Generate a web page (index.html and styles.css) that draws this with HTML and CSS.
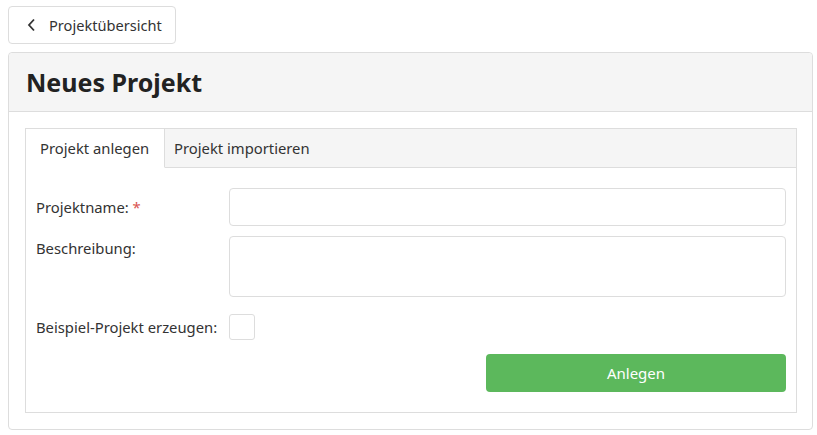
FILE: index.html
```html
<!DOCTYPE html>
<html lang="de">
<head>
<meta charset="utf-8">
<title>Neues Projekt</title>
<link rel="stylesheet" href="styles.css">
</head>
<body>
<div class="page">
  <a class="back-btn" href="#">
    <svg class="chev" width="9" height="14" viewBox="0 0 9 14"><path d="M7 1.5 L2 7 L7 12.5" fill="none" stroke="#333" stroke-width="1.8"/></svg>
    <span>Projektübersicht</span>
  </a>
  <div class="panel">
    <div class="panel-head"><h1>Neues Projekt</h1></div>
    <div class="panel-body">
      <div class="tabbox">
        <div class="tabs">
          <div class="tab active">Projekt anlegen</div>
          <div class="tab second">Projekt importieren</div>
          <div class="tab-fill"></div>
        </div>
        <form class="form">
          <div class="row">
            <label class="lbl">Projektname: <span class="req">*</span></label>
            <input class="ctl" type="text">
          </div>
          <div class="row top">
            <label class="lbl">Beschreibung:</label>
            <textarea class="ctl area"></textarea>
          </div>
          <div class="row">
            <label class="lbl">Beispiel-Projekt erzeugen:</label>
            <span class="check"></span>
          </div>
          <div class="actions">
            <button type="button" class="btn">Anlegen</button>
          </div>
        </form>
      </div>
    </div>
  </div>
</div>
</body>
</html>
```
FILE: styles.css
```css
* { box-sizing: border-box; }
body {
  margin: 0;
  font-family: "Noto Sans", "Open Sans", sans-serif;
  font-size: 14.8px;
  color: #333;
  background: #fff;
}
.page {
  padding: 6px 0 0 8px;
  width: 813px;
}
.back-btn {
  display: inline-flex;
  align-items: center;
  height: 38px;
  width: 168px;
  padding: 0 0 0 18px;
  border: 1px solid #ddd;
  border-radius: 4px;
  color: #333;
  text-decoration: none;
  font-size: 14.6px;
}
.chev { margin-right: 13px; }
.panel {
  margin-top: 8px;
  border: 1px solid #ddd;
  border-radius: 4px;
  height: 378px;
}
.panel-head {
  background: #f5f5f5;
  border-bottom: 1px solid #ddd;
  height: 59px;
  padding: 0 17px;
  display: flex;
  align-items: center;
  border-radius: 4px 4px 0 0;
}
h1 {
  margin: 0;
  font-size: 25px;
  font-weight: 700;
  color: #222;
}
.panel-body {
  padding: 16px 15px 0 16px;
}
.tabbox {
  border: 1px solid #ddd;
  height: 285px;
}
.tabs {
  display: flex;
  height: 39px;
  background: #f5f5f5;
}
.tab {
  padding: 0 14px;
  display: flex;
  align-items: center;
  border-bottom: 1px solid #ddd;
}
.tab.second { padding-left: 9px; }
.tab.active {
  background: #fff;
  border-right: 1px solid #ddd;
  border-bottom-color: #fff;
  width: 139px;
}
.tab-fill { flex: 1; border-bottom: 1px solid #ddd; }
.form {
  padding: 20px 10px 0 10px;
}
.row {
  display: flex;
  align-items: center;
  margin-bottom: 10px;
}
.row.top { align-items: flex-start; }
.row.top .lbl { padding-top: 2px; }
.lbl {
  width: 193px;
  flex: none;
}
.req { color: #d9534f; }
.ctl {
  flex: 1;
  height: 38px;
  border: 1px solid #ddd;
  border-radius: 4px;
  font: inherit;
}
.area {
  height: 61px;
  resize: none;
}
.row:nth-child(3) { margin-top: 17px; }
.check {
  width: 26px;
  height: 26px;
  border: 1px solid #ddd;
  border-radius: 3px;
}
.actions {
  display: flex;
  justify-content: flex-end;
  margin-top: 14px;
}
.btn {
  width: 300px;
  height: 38px;
  background: #5cb85c;
  border: 0;
  border-radius: 4px;
  color: #fff;
  font: inherit;
  font-size: 15px;
}
```
